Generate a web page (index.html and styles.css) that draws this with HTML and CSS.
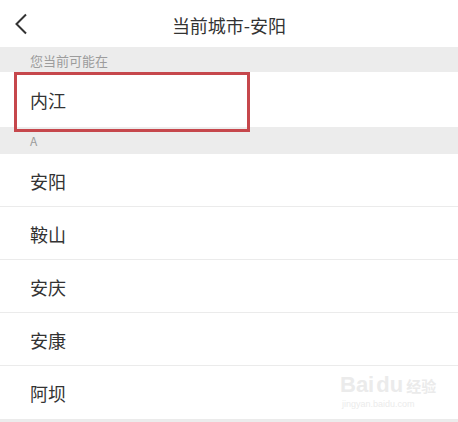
FILE: index.html
```html
<!DOCTYPE html>
<html lang="zh-CN">
<head>
<meta charset="utf-8">
<link rel="stylesheet" href="styles.css">
</head>
<body>
<div class="page">
  <header class="nav">
    <svg class="back" width="14" height="22" viewBox="0 0 14 22"><path d="M12 1.5 L2.5 11 L12 20.5" fill="none" stroke="#333" stroke-width="2"/></svg>
    <div class="title">当前城市-安阳</div>
  </header>
  <div class="band band-first">您当前可能在</div>
  <div class="current">
    <span class="city">内江</span>
    <div class="mark"></div>
  </div>
  <div class="band band-letter">A</div>
  <ul class="list">
    <li class="row">安阳</li>
    <li class="row">鞍山</li>
    <li class="row">安庆</li>
    <li class="row">安康</li>
    <li class="row row-last">阿坝</li>
  </ul>
  <div class="watermark">
    <div class="wm-top"><span class="wm-bai">Bai</span><span class="wm-du">du</span><span class="wm-jy">经验</span></div>
    <div class="wm-url">jingyan.baidu.com</div>
  </div>
</div>
</body>
</html>
```
FILE: styles.css
```css
* { box-sizing: border-box; }
html, body { margin: 0; padding: 0; }
body {
  background: #ececec;
  font-family: "Noto Sans CJK SC", "Noto Sans", sans-serif;
  color: #333;
}
.page {
  position: relative;
  width: 458px;
  height: 422px;
  overflow: hidden;
  background: #ececec;
}
.nav {
  position: relative;
  height: 47px;
  background: #fff;
  display: flex;
  align-items: center;
  justify-content: center;
}
.back {
  position: absolute;
  left: 14px;
  top: 13px;
}
.title {
  font-size: 18px;
  line-height: 24px;
  color: #333;
  margin-top: 2px;
}
.band {
  background: #ececec;
  color: #9c9c9c;
  font-size: 13px;
  padding-left: 30px;
  display: flex;
  align-items: center;
}
.band-first { height: 25px; padding-top: 2px; }
.band-letter { height: 27px; font-size: 12px; padding-top: 0; }
.current {
  position: relative;
  height: 55px;
  background: #fff;
  display: flex;
  align-items: center;
  padding-left: 30px;
}
.city, .row {
  font-size: 18px;
  color: #333;
}
.mark {
  position: absolute;
  left: 14px;
  top: 0;
  width: 236px;
  height: 60px;
  border: 3px solid #c6474c;
  z-index: 2;
}
.list {
  list-style: none;
  margin: 0;
  padding: 0;
  background: #fff;
}
.row {
  height: 53px;
  display: flex;
  align-items: center;
  padding-left: 30px;
  border-bottom: 1px solid #ebebeb;
  padding-top: 1px;
}
.row-last { height: 54px; }
.watermark {
  position: absolute;
  left: 340px;
  top: 372px;
  color: #ebebeb;
  font-family: "Liberation Sans", sans-serif;
}
.wm-top { display: flex; align-items: baseline; font-size: 22px; line-height: 26px; font-weight: bold; }
.wm-du { margin-left: 2px; }
.wm-jy { font-size: 15px; margin-left: 3px; font-family: "Noto Sans CJK SC", sans-serif; }
.wm-url { font-size: 9px; line-height: 10px; margin-left: 2px; }
```
